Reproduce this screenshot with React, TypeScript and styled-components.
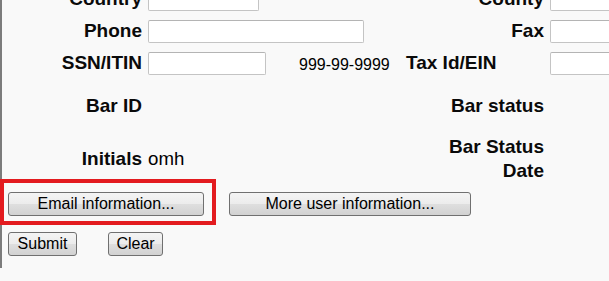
import styled, { createGlobalStyle } from "styled-components";

const GlobalStyle = createGlobalStyle`
  html, body {
    margin: 0;
    padding: 0;
    background: #f9f9f9;
  }
  body {
    font-family: "Liberation Sans", Arial, sans-serif;
    color: #000;
    overflow: hidden;
  }
`;

const Page = styled.div`
  min-height: 281px;
  border-left: 2px solid #7c7c7c;
  box-sizing: border-box;
`;

const Row = styled.div<{ $h: number; $mt: number }>`
  display: grid;
  grid-template-columns: 140px 145px 95px 144px 1fr;
  column-gap: 6px;
  align-items: center;
  height: ${({ $h }) => $h}px;
  margin-top: ${({ $mt }) => $mt}px;
`;

const Label = styled.div<{ $col?: number; $left?: boolean }>`
  grid-column: ${({ $col }) => $col ?? 1};
  font-size: 19px;
  font-weight: 700;
  line-height: 24px;
  color: #0a0a0a;
  white-space: nowrap;
  text-align: ${({ $left }) => ($left ? "left" : "right")};
  padding-left: ${({ $left }) => ($left ? 6 : 0)}px;
`;

const Value = styled.div`
  grid-column: 2;
  font-size: 18.67px;
  line-height: 24px;
  white-space: nowrap;
`;

const Hint = styled.div`
  grid-column: 3;
  font-size: 16px;
  margin-top: 4px;
  white-space: nowrap;
`;

const TextInput = styled.input<{ $w: number; $span?: number }>`
  grid-column: ${({ $span }) => ($span ? `span ${$span}` : "auto")};
  width: ${({ $w }) => $w}px;
  height: 23px;
  box-sizing: border-box;
  margin: 0;
  padding: 0 3px;
  border: 1px solid #c4c4c4;
  border-top-color: #b4b4b4;
  border-radius: 2px;
  background: #fff;
  font-family: inherit;
  font-size: 14px;
`;

const ButtonBar = styled.div<{ $mt: number; $gap: number }>`
  display: flex;
  align-items: center;
  gap: ${({ $gap }) => $gap}px;
  padding-left: 6px;
  margin-top: ${({ $mt }) => $mt}px;
`;

const Highlight = styled.span`
  position: relative;
  display: inline-flex;

  &::after {
    content: "";
    position: absolute;
    top: -13px;
    left: -8px;
    right: -12px;
    bottom: -9px;
    border: 4px solid #e31b1f;
    pointer-events: none;
  }
`;

const Button = styled.button<{ $w: number }>`
  width: ${({ $w }) => $w}px;
  height: 24px;
  box-sizing: border-box;
  margin: 0;
  padding: 0;
  border: 1px solid #707070;
  border-radius: 3px;
  background: linear-gradient(
    #f4f4f4 0%,
    #ececec 48%,
    #dedede 52%,
    #d2d2d2 100%
  );
  font-family: "Liberation Sans", Arial, sans-serif;
  font-size: 16px;
  color: #000;
  cursor: pointer;
`;

export default function App() {
  return (
    <>
      <GlobalStyle />
      <Page>
        <Row $h={23} $mt={-13}>
          <Label>Country</Label>
          <TextInput $w={111} />
          <div />
          <Label $col={4}>County</Label>
          <TextInput $w={120} />
        </Row>
        <Row $h={23} $mt={9}>
          <Label>Phone</Label>
          <TextInput $w={216} $span={2} />
          <Label $col={4}>Fax</Label>
          <TextInput $w={120} />
        </Row>
        <Row $h={23} $mt={9}>
          <Label>SSN/ITIN</Label>
          <TextInput $w={118} />
          <Hint>999-99-9999</Hint>
          <Label $col={4} $left>
            Tax Id/EIN
          </Label>
          <TextInput $w={120} />
        </Row>
        <Row $h={24} $mt={20}>
          <Label>Bar ID</Label>
          <Label $col={4}>Bar status</Label>
        </Row>
        <Row $h={48} $mt={17}>
          <Label>Initials</Label>
          <Value>omh</Value>
          <Label $col={4}>
            Bar Status
            <br />
            Date
          </Label>
        </Row>
        <ButtonBar $mt={9} $gap={25}>
          <Highlight>
            <Button $w={196}>Email information...</Button>
          </Highlight>
          <Button $w={242}>More user information...</Button>
        </ButtonBar>
        <ButtonBar $mt={16} $gap={31}>
          <Button $w={69}>Submit</Button>
          <Button $w={55}>Clear</Button>
        </ButtonBar>
      </Page>
    </>
  );
}
